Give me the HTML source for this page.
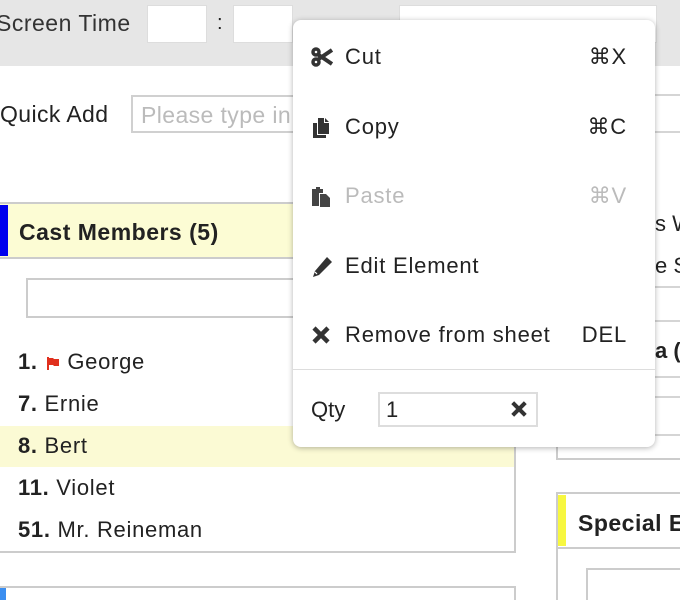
<!DOCTYPE html>
<html style="overflow:hidden"><head><style>
body{margin:0;width:680px;height:600px;overflow:hidden;position:relative;font-family:"Liberation Sans",Arial,sans-serif;color:#222;background:#fff;white-space:nowrap}
.a{position:absolute}
.box{position:absolute;background:#fff;border:1px solid #ccc;box-sizing:border-box}
.hl{position:absolute;height:2px;background:#d5d5d5}
.li{position:absolute;left:18px;font-size:22px;color:#222;letter-spacing:0.7px}
.li b{font-weight:bold}
.mi{position:absolute;left:0;width:362px;height:30px;font-size:22px;color:#222;letter-spacing:0.8px}
.mi .t{position:absolute;left:52px;top:2px}
.mi .k{position:absolute;right:28px;top:2px}
.mi svg{position:absolute;left:18px;top:5px}
</style></head><body>
<div class="a" style="left:0;top:0;width:680px;height:66px;background:#e6e6e6"></div>
<div class="a" style="left:-4px;top:10px;font-size:23px;color:#333;letter-spacing:0.5px">Screen Time</div>
<div class="box" style="left:147px;top:5px;width:60px;height:38px;border-color:#ddd"></div>
<div class="a" style="left:217px;top:12px;font-size:20px">:</div>
<div class="box" style="left:233px;top:5px;width:60px;height:38px;border-color:#ddd"></div>
<div class="box" style="left:399px;top:5px;width:258px;height:38px;border-color:#ddd"></div>
<div class="a" style="left:0;top:101px;font-size:23px;letter-spacing:0.4px">Quick Add</div>
<div class="box" style="left:131px;top:95px;width:200px;height:38px;border:2px solid #d0d0d0;padding:5px 8px;font-size:23px;color:#bbb;letter-spacing:0.4px">Please type in</div>
<div class="a" style="left:0;top:202px;width:516px;height:351px;border:2px solid #ccc;border-left:none;box-sizing:border-box"></div>
<div class="a" style="left:0;top:204px;width:514px;height:53px;background:#fcfcd4;border-bottom:2px solid #ccc"></div>
<div class="a" style="left:0;top:205px;width:8px;height:51px;background:#0000ee"></div>
<div class="a" style="left:19px;top:219px;font-size:23px;font-weight:bold;color:#222;letter-spacing:0.5px">Cast Members (5)</div>
<div class="box" style="left:26px;top:278px;width:300px;height:40px;border:2px solid #ccc"></div>
<div class="a" style="left:0;top:426px;width:514px;height:41px;background:#fbfad4"></div>
<div class="li" style="top:349px"><b>1.</b> <svg width="16" height="14" viewBox="0 0 14 14" style="vertical-align:-1px"><path d="M1 1h2v13H1zM3 2h4l1 1h5v7H8l-1-1H3z" fill="#e0301e"/></svg> George</div>
<div class="li" style="top:391px"><b>7.</b> Ernie</div>
<div class="li" style="top:433px"><b>8.</b> Bert</div>
<div class="li" style="top:475px"><b>11.</b> Violet</div>
<div class="li" style="top:517px"><b>51.</b> Mr. Reineman</div>
<div class="a" style="left:0;top:586px;width:516px;height:14px;border:2px solid #ccc;border-left:none;border-bottom:none;box-sizing:border-box"></div>
<div class="a" style="left:0;top:588px;width:6px;height:12px;background:#3b8ef0"></div>
<div class="hl" style="left:655px;top:94px;width:25px"></div>
<div class="hl" style="left:655px;top:131px;width:25px"></div>
<div class="a" style="left:655px;top:211px;font-size:22px">s W</div>
<div class="a" style="left:655px;top:253px;font-size:22px">e S</div>
<div class="hl" style="left:655px;top:286px;width:25px"></div>
<div class="hl" style="left:655px;top:320px;width:25px"></div>
<div class="a" style="left:655px;top:338px;font-size:22px;font-weight:bold">a (</div>
<div class="hl" style="left:655px;top:376px;width:25px"></div>
<div class="hl" style="left:655px;top:396px;width:25px"></div>
<div class="hl" style="left:655px;top:434px;width:25px"></div>
<div class="a" style="left:556px;top:380px;width:130px;height:80px;border:2px solid #ccc;border-top:none;border-right:none;box-sizing:border-box"></div>
<div class="a" style="left:556px;top:492px;width:130px;height:110px;border:2px solid #ccc;border-right:none;border-bottom:none;box-sizing:border-box"></div>
<div class="a" style="left:558px;top:494px;width:130px;height:53px;background:#fff;border-bottom:2px solid #ccc"></div>
<div class="a" style="left:558px;top:495px;width:8px;height:51px;background:#f7f740"></div>
<div class="a" style="left:578px;top:510px;font-size:23px;font-weight:bold;letter-spacing:0.5px">Special E</div>
<div class="a" style="left:586px;top:568px;width:100px;height:40px;border:2px solid #ccc;box-sizing:border-box"></div>
<div class="a" style="left:293px;top:20px;width:362px;height:427px;background:#fff;border-radius:8px;box-shadow:0 1px 6px rgba(0,0,0,.3)">
 <div class="mi" style="top:22px"><svg width="22" height="20" viewBox="0 0 22 20"><circle cx="5" cy="5" r="3" fill="none" stroke="#333" stroke-width="3.5"/><circle cx="5" cy="15" r="3" fill="none" stroke="#333" stroke-width="3.5"/><path d="M7 7.5L21 17M7 12.5L21 3" stroke="#333" stroke-width="4"/></svg><span class="t">Cut</span><span class="k">⌘X</span></div>
 <div class="mi" style="top:92px"><svg width="20" height="22" viewBox="0 0 20 22"><path d="M7 1h6v5h5v11H7z M14 1l4 4h-4z" fill="#333"/><path d="M2 6h4v12h9v3H2z" fill="#333"/></svg><span class="t">Copy</span><span class="k">⌘C</span></div>
 <div class="mi" style="top:161px;color:#bbb"><svg width="20" height="22" viewBox="0 0 20 22"><path d="M1 3h4V1h4v2h3v4H8v13H1z" fill="#444"/><path d="M9 8h6l4 4v9H9z" fill="#444"/></svg><span class="t">Paste</span><span class="k">⌘V</span></div>
 <div class="mi" style="top:231px"><svg width="22" height="22" viewBox="0 0 22 22"><path d="M16 1l5 5-13 13-6 2 2-6z" fill="#333"/><path d="M4 16l2 2" stroke="#fff" stroke-width="1.2"/></svg><span class="t">Edit Element</span></div>
 <div class="mi" style="top:300px"><svg width="20" height="20" viewBox="0 0 20 20"><path d="M3 3l14 14M17 3L3 17" stroke="#333" stroke-width="4.5"/></svg><span class="t">Remove from sheet</span><span class="k">DEL</span></div>
 <div class="a" style="left:0;top:349px;width:362px;height:1px;background:#ddd"></div>
 <div class="a" style="left:18px;top:377px;font-size:22px">Qty</div>
 <div class="box" style="left:85px;top:372px;width:160px;height:35px;border:2px solid #ddd;font-size:22px;padding:3px 6px">1</div>
 <svg class="a" style="left:217px;top:380px" width="18" height="18" viewBox="0 0 20 20"><path d="M3 3l14 14M17 3L3 17" stroke="#333" stroke-width="4.5"/></svg>
</div>
</body></html>
